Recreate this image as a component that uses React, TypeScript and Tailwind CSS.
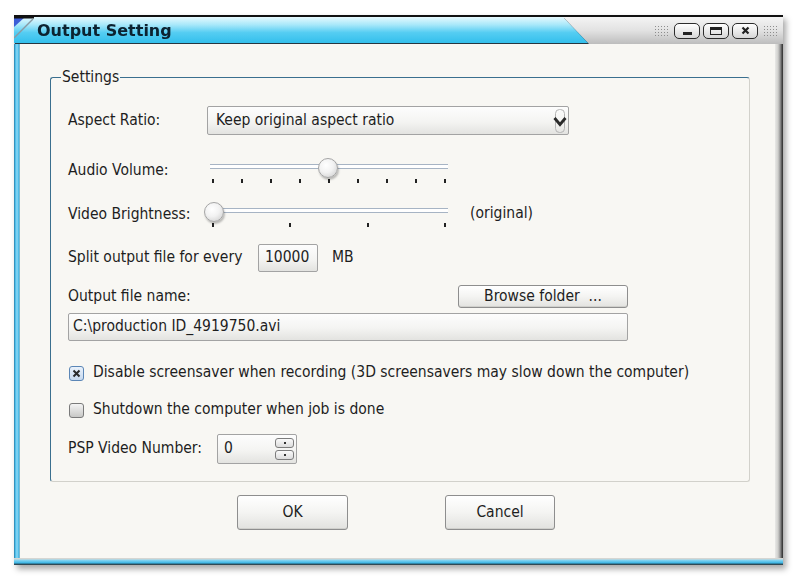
import { ReactNode } from 'react';

const font = "font-['DejaVu_Sans_Condensed','DejaVu_Sans',Tahoma,sans-serif] [font-stretch:condensed]";

// raised field used for select, text inputs and spin box
const fieldCls =
  'border border-[#a3a3a3] rounded-[2px] bg-[linear-gradient(#fdfdfd_0%,#f4f4f2_55%,#e3e3e0_100%)]';

const btnCls =
  'border border-[#8e8e8e] rounded-[3px] bg-[linear-gradient(#ffffff_0%,#f4f4f2_50%,#e2e2df_100%)] shadow-[inset_0_-1px_0_#d0d0cc]';

function Slider({ thumb, ticks }: { thumb: number; ticks: number[] }) {
  return (
    <div className="relative h-[30px] w-[240px] shrink-0">
      {/* track */}
      <div className="absolute left-0 top-[9px] h-[5px] w-[238px] border-y border-[#a7b4c4] bg-white" />
      {/* ticks */}
      {ticks.map((x) => (
        <div key={x} className="absolute top-[24px] h-[4px] w-[2px] bg-[#222]" style={{ left: x - 1 }} />
      ))}
      {/* thumb */}
      <div
        className="absolute top-[3px] h-[20px] w-[20px] rounded-full border border-[#a5a5a5] bg-[radial-gradient(circle_at_40%_35%,#ffffff_0%,#f2f2f2_45%,#c9c9c9_100%)] shadow-[1px_2px_2px_rgba(0,0,0,0.25)]"
        style={{ left: thumb - 10 }}
      />
    </div>
  );
}

function Checkbox({ checked, children }: { checked?: boolean; children: ReactNode }) {
  return (
    <div className="flex h-[18px] items-center">
      {checked ? (
        <div className="ml-px flex h-[15px] w-[15px] items-center justify-center rounded-[3px] border border-[#5b86b6] bg-[linear-gradient(#eaf2fb,#c7d9ee)]">
          <svg width="9" height="9" viewBox="0 0 9 9">
            <path d="M1.5 1.5 L7.5 7.5 M7.5 1.5 L1.5 7.5" stroke="#2a2a2a" strokeWidth="2" />
          </svg>
        </div>
      ) : (
        <div className="ml-px h-[15px] w-[15px] rounded-[3px] border border-[#7a7a7a] bg-[linear-gradient(#f4f4f4,#c8c8c6)]" />
      )}
      <span className="ml-[9px]">{children}</span>
    </div>
  );
}

function CaptionButton({ children }: { children: ReactNode }) {
  return (
    <div className="flex h-[16px] w-[26px] items-center justify-center rounded-[5px] border-[1.5px] border-[#2c2c2c] bg-[linear-gradient(#ffffff,#d6d6d6)]">
      {children}
    </div>
  );
}

export default function App() {
  return (
    <div className={`h-[581px] w-[800px] overflow-hidden bg-white pl-[14px] pt-[15px] text-[15.5px] text-[#1e1e1e] ${font}`}>
      <div className="flex h-[550px] w-[769px] flex-col shadow-[3px_4px_6px_rgba(0,0,0,0.35)]">
        {/* Title bar */}
        <div className="flex h-[29px] border-t-2 border-[#111] bg-[linear-gradient(#f4f4f4_0%,#e2e2e2_50%,#bdbdbd_100%)]">
          <div className="[filter:drop-shadow(1px_1px_0_#263640)]">
            <div className="relative flex h-[26px] w-[574px] items-center bg-[linear-gradient(#e6f9fe_0%,#a8e8fa_30%,#55cdf2_60%,#33bfec_100%)] pl-[23px] [clip-path:polygon(0_0,549px_0,574px_100%,0_100%)]">
              <svg className="absolute left-0 top-0" width="22" height="22" viewBox="0 0 22 22">
                <polygon points="0,0 11,0 0,10" fill="#3c5ed6" />
                <line x1="0" y1="0.5" x2="20" y2="0.5" stroke="#111" strokeWidth="2" />
                <line x1="0" y1="21" x2="19" y2="2" stroke="#8a9aa4" strokeWidth="1.5" />
              </svg>
              <span className="mt-[2px] font-['DejaVu_Sans',Verdana,sans-serif] text-[16px] font-bold leading-none text-[#0c2230] [font-stretch:normal]">
                Output Setting
              </span>
            </div>
          </div>
          <div className="flex flex-1 items-center justify-end gap-[3px] pr-[6px]">
            <div className="mr-[2px] h-[12px] w-[15px] bg-[radial-gradient(#8d8d8d_0.8px,transparent_1px)] bg-[length:3px_3px]" />
            <CaptionButton>
              <div className="mt-[6px] h-[3px] w-[9px] bg-[#222]" />
            </CaptionButton>
            <CaptionButton>
              <div className="h-[8px] w-[12px] border-[1.5px] border-t-[3px] border-[#222]" />
            </CaptionButton>
            <CaptionButton>
              <svg width="9" height="9" viewBox="0 0 9 9">
                <path d="M1.5 1.5 L7.5 7.5 M7.5 1.5 L1.5 7.5" stroke="#222" strokeWidth="2.2" />
              </svg>
            </CaptionButton>
            <div className="ml-[2px] h-[12px] w-[14px] bg-[radial-gradient(#8d8d8d_0.8px,transparent_1px)] bg-[length:3px_3px]" />
          </div>
        </div>

        {/* Body */}
        <div className="flex flex-1">
          <div className="w-[6px] bg-[linear-gradient(90deg,#2c6d92_0px,#3cb6e6_1px,#8fd9f5_3px,#3ab3e3_5px,#bdbdbd_6px)]" />
          <div className="flex flex-1 flex-col bg-[#f8f7f3]">
            <fieldset className="ml-[30px] mt-[24px] w-[700px] rounded-[3px] border border-b-[#d2d1cb] border-l-[#3a6f8e] border-r-[#d2d1cb] border-t-[#3a6f8e] pb-[17px] pl-[17px] pt-[20px]">
              <legend className="-ml-[7px] px-px leading-[18px]">Settings</legend>

              <div className="flex h-[29px] items-center">
                <span className="w-[139px]">Aspect Ratio:</span>
                <div className={`flex h-[29px] w-[362px] items-center justify-between pl-[8px] pr-[1px] ${fieldCls}`}>
                  <span>Keep original aspect ratio</span>
                  <svg width="14" height="26" viewBox="0 0 14 26">
                    <rect x="2.5" y="1.5" width="9" height="23" rx="4" fill="none" stroke="#b4b4b4" />
                    <path d="M1.5 10 L7 16.5 L12.5 10" fill="none" stroke="#2a2a2a" strokeWidth="2.8" />
                  </svg>
                </div>
              </div>

              <div className="mt-[20px] flex h-[30px] items-start">
                <span className="w-[142px] pt-[4px]">Audio Volume:</span>
                <Slider thumb={118} ticks={[3, 32, 61, 90, 119, 148, 177, 206, 235]} />
              </div>

              <div className="mt-[14px] flex h-[30px] items-start">
                <span className="w-[142px] pt-[4px]">Video Brightness:</span>
                <Slider thumb={4} ticks={[3, 80, 158, 235]} />
                <span className="ml-[20px] pt-[3px]">(original)</span>
              </div>

              <div className="mt-[15px] flex h-[28px] items-center">
                <span className="w-[190px]">Split output file for every</span>
                <div className={`flex h-[28px] w-[60px] items-center pl-[6px] ${fieldCls}`}>10000</div>
                <span className="ml-[14px]">MB</span>
              </div>

              <div className="mt-[13px] flex h-[23px] w-[560px] items-center justify-between">
                <span>Output file name:</span>
                <div className={`flex h-[23px] w-[170px] items-center justify-center ${btnCls}`}>Browse folder&nbsp; ...</div>
              </div>

              <div className={`mt-[5px] flex h-[28px] w-[560px] items-center pl-[4px] ${fieldCls}`}>
                C:\production ID_4919750.avi
              </div>

              <div className="mt-[23px]">
                <Checkbox checked>
                  Disable screensaver when recording (3D screensavers may slow down the computer)
                </Checkbox>
              </div>
              <div className="mt-[19px]">
                <Checkbox>Shutdown the computer when job is done</Checkbox>
              </div>

              <div className="mt-[15px] flex h-[30px] items-center">
                <span className="w-[149px]">PSP Video Number:</span>
                <div className={`flex h-[30px] w-[80px] items-center justify-between pl-[6px] pr-[2px] ${fieldCls}`}>
                  <span>0</span>
                  <div className="flex flex-col gap-[2px]">
                    <div className="flex h-[10px] w-[19px] items-center justify-center rounded-[3px] border border-[#7c7c7c] bg-[linear-gradient(#fafafa,#dcdcdc)]">
                      <div className="h-[2px] w-[2px] bg-[#333]" />
                    </div>
                    <div className="flex h-[10px] w-[19px] items-center justify-center rounded-[3px] border border-[#7c7c7c] bg-[linear-gradient(#fafafa,#dcdcdc)]">
                      <div className="h-[2px] w-[2px] bg-[#333]" />
                    </div>
                  </div>
                </div>
              </div>
            </fieldset>

            <div className="mt-[13px] flex justify-center gap-[97px] pr-[3px]">
              <div className={`flex h-[35px] w-[111px] items-center justify-center ${btnCls}`}>OK</div>
              <div className={`flex h-[35px] w-[110px] items-center justify-center ${btnCls}`}>Cancel</div>
            </div>
          </div>
          <div className="w-[8px] bg-[linear-gradient(90deg,#e9e9e7_0px,#cfcfcc_3px,#9a9a9a_5px,#4a4a4a_7px,#2e2e2e_8px)]" />
        </div>
        <div className="h-[7px] bg-[linear-gradient(#d6d6d2_0px,#d6d6d2_1px,#8bd6f2_2px,#3ab5e4_5px,#27586e_6px,#3a3a3a_7px)]" />
      </div>
    </div>
  );
}
